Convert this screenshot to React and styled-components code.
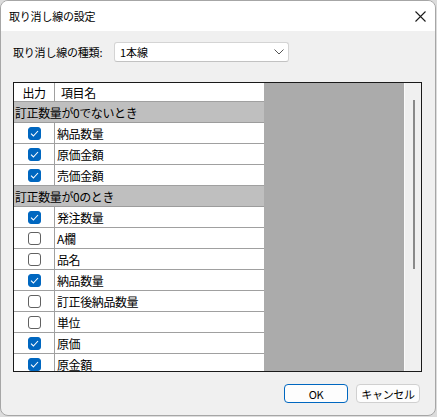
import React from "react";
import styled, { createGlobalStyle } from "styled-components";

const GlobalStyle = createGlobalStyle`
  html, body {
    margin: 0;
    padding: 0;
    background: #dcdcdc;
  }
  body {
    font-family: "Noto Sans CJK JP", "Noto Sans", sans-serif;
    color: #000;
  }
`;

const items = [
  { type: "group", label: "訂正数量が0でないとき" },
  { type: "item", label: "納品数量", checked: true },
  { type: "item", label: "原価金額", checked: true },
  { type: "item", label: "売価金額", checked: true },
  { type: "group", label: "訂正数量が0のとき" },
  { type: "item", label: "発注数量", checked: true },
  { type: "item", label: "A欄", checked: false },
  { type: "item", label: "品名", checked: false },
  { type: "item", label: "納品数量", checked: true },
  { type: "item", label: "訂正後納品数量", checked: false },
  { type: "item", label: "単位", checked: false },
  { type: "item", label: "原価", checked: true },
  { type: "item", label: "原金額", checked: true },
];

export default function App() {
  return (
    <>
      <GlobalStyle />
      <Window>
        <TitleBar>
          <Title>取り消し線の設定</Title>
          <CloseButton aria-label="閉じる">
            <svg width="11" height="11" viewBox="0 0 11 11">
              <path d="M0.5 0.5 L10.5 10.5 M10.5 0.5 L0.5 10.5" stroke="#1a1a1a" strokeWidth="1.1" fill="none" />
            </svg>
          </CloseButton>
        </TitleBar>
        <Body>
          <FieldRow>
            <FieldLabel>取り消し線の種類:</FieldLabel>
            <Select>
              <span>1本線</span>
              <svg width="10" height="6" viewBox="0 0 10 6">
                <path d="M0.5 0.5 L5 5 L9.5 0.5" stroke="#555" strokeWidth="1" fill="none" />
              </svg>
            </Select>
          </FieldRow>
          <GridBox>
            <GridArea>
              <GridTable>
                <HeaderRow>
                  <CheckCell $header>出力</CheckCell>
                  <NameCell $header>項目名</NameCell>
                </HeaderRow>
                {items.map((it, i) =>
                  it.type === "group" ? (
                    <GroupRow key={i}>{it.label}</GroupRow>
                  ) : (
                    <Row key={i}>
                      <CheckCell>
                        <CheckBox $checked={it.checked}>
                          {it.checked && (
                            <svg width="9" height="7" viewBox="0 0 9 7">
                              <path d="M1 3.6 L3.4 6 L8 1" stroke="#fff" strokeWidth="1.1" fill="none" />
                            </svg>
                          )}
                        </CheckBox>
                      </CheckCell>
                      <NameCell>{it.label}</NameCell>
                    </Row>
                  )
                )}
              </GridTable>
            </GridArea>
            <ScrollTrack>
              <ScrollThumb />
            </ScrollTrack>
          </GridBox>
          <ButtonRow>
            <Button $primary>OK</Button>
            <Button>キャンセル</Button>
          </ButtonRow>
        </Body>
      </Window>
    </>
  );
}

const Window = styled.div`
  width: 436px;
  height: 416px;
  box-sizing: border-box;
  border: 1px solid #a6a6a6;
  border-radius: 8px;
  background: #f0f0f0;
  overflow: hidden;
  display: flex;
  flex-direction: column;
`;

const TitleBar = styled.div`
  height: 30px;
  background: #fff;
  display: flex;
  align-items: center;
  justify-content: space-between;
  padding: 0 9px 0 8px;
`;

const Title = styled.div`
  font-size: 11px;
  letter-spacing: -0.2px;
`;

const CloseButton = styled.div`
  width: 11px;
  height: 11px;
  display: flex;
  margin-top: 1px;
`;

const Body = styled.div`
  display: flex;
  flex-direction: column;
  padding: 11px 0 0 12px;
`;

const FieldRow = styled.div`
  display: flex;
  align-items: center;
  height: 20px;
`;

const FieldLabel = styled.div`
  width: 101px;
  font-size: 11px;
  letter-spacing: -0.2px;
`;

const Select = styled.div`
  width: 175px;
  height: 20px;
  box-sizing: border-box;
  border: 1px solid #d4d4d4;
  border-bottom-color: #c2c2c2;
  border-radius: 3px;
  background: #fff;
  display: flex;
  align-items: center;
  justify-content: space-between;
  padding: 0 4px 0 5px;
  font-size: 11px;
`;

const GridBox = styled.div`
  margin-top: 20px;
  width: 409px;
  height: 290px;
  box-sizing: border-box;
  border: 1px solid #1a1a1a;
  display: flex;
`;

const GridArea = styled.div`
  flex: 1;
  background: #ababab;
  overflow: hidden;
`;

const GridTable = styled.div`
  width: 250px;
  display: flex;
  flex-direction: column;
`;

const Row = styled.div`
  height: 21px;
  flex: none;
  box-sizing: border-box;
  border-bottom: 1px solid #a0a0a0;
  background: #fff;
  display: flex;
  font-size: 12px;
  letter-spacing: -0.4px;
`;

const HeaderRow = styled(Row)`
  height: 19px;
`;

const GroupRow = styled(Row)`
  background: #bfbfbf;
  align-items: center;
  padding-left: 1px;
  border-bottom-color: #9c9c9c;
`;

const CheckCell = styled.div`
  width: 41px;
  box-sizing: border-box;
  border-right: 1px solid #a0a0a0;
  display: flex;
  align-items: center;
  justify-content: center;
  padding-left: ${(p) => (p.$header ? "0" : "1px")};
`;

const NameCell = styled.div`
  flex: 1;
  display: flex;
  align-items: center;
  padding-left: ${(p) => (p.$header ? "6px" : "2px")};
`;

const CheckBox = styled.div`
  width: 13px;
  height: 13px;
  box-sizing: border-box;
  border-radius: 3px;
  background: ${(p) => (p.$checked ? "#0067c0" : "#fff")};
  border: 1px solid ${(p) => (p.$checked ? "#0067c0" : "#616161")};
  display: flex;
  align-items: center;
  justify-content: center;
`;

const ScrollTrack = styled.div`
  width: 17px;
  box-sizing: border-box;
  border-left: 1px solid #fafafa;
  background: #f0f0f0;
  display: flex;
  justify-content: center;
  padding-top: 17px;
  padding-left: 1px;
`;

const ScrollThumb = styled.div`
  width: 2px;
  height: 169px;
  background: #8a8a8a;
`;

const ButtonRow = styled.div`
  width: 409px;
  margin-top: 12px;
  display: flex;
  justify-content: flex-end;
  gap: 8px;
  padding-right: 2px;
  box-sizing: border-box;
`;

const Button = styled.div`
  width: 64px;
  height: 19px;
  box-sizing: border-box;
  border-radius: 4px;
  border: 1px solid ${(p) => (p.$primary ? "#0067c0" : "#d0d0d0")};
  background: #fdfdfd;
  display: flex;
  align-items: center;
  justify-content: center;
  font-size: 11px;
  letter-spacing: -0.3px;
`;
